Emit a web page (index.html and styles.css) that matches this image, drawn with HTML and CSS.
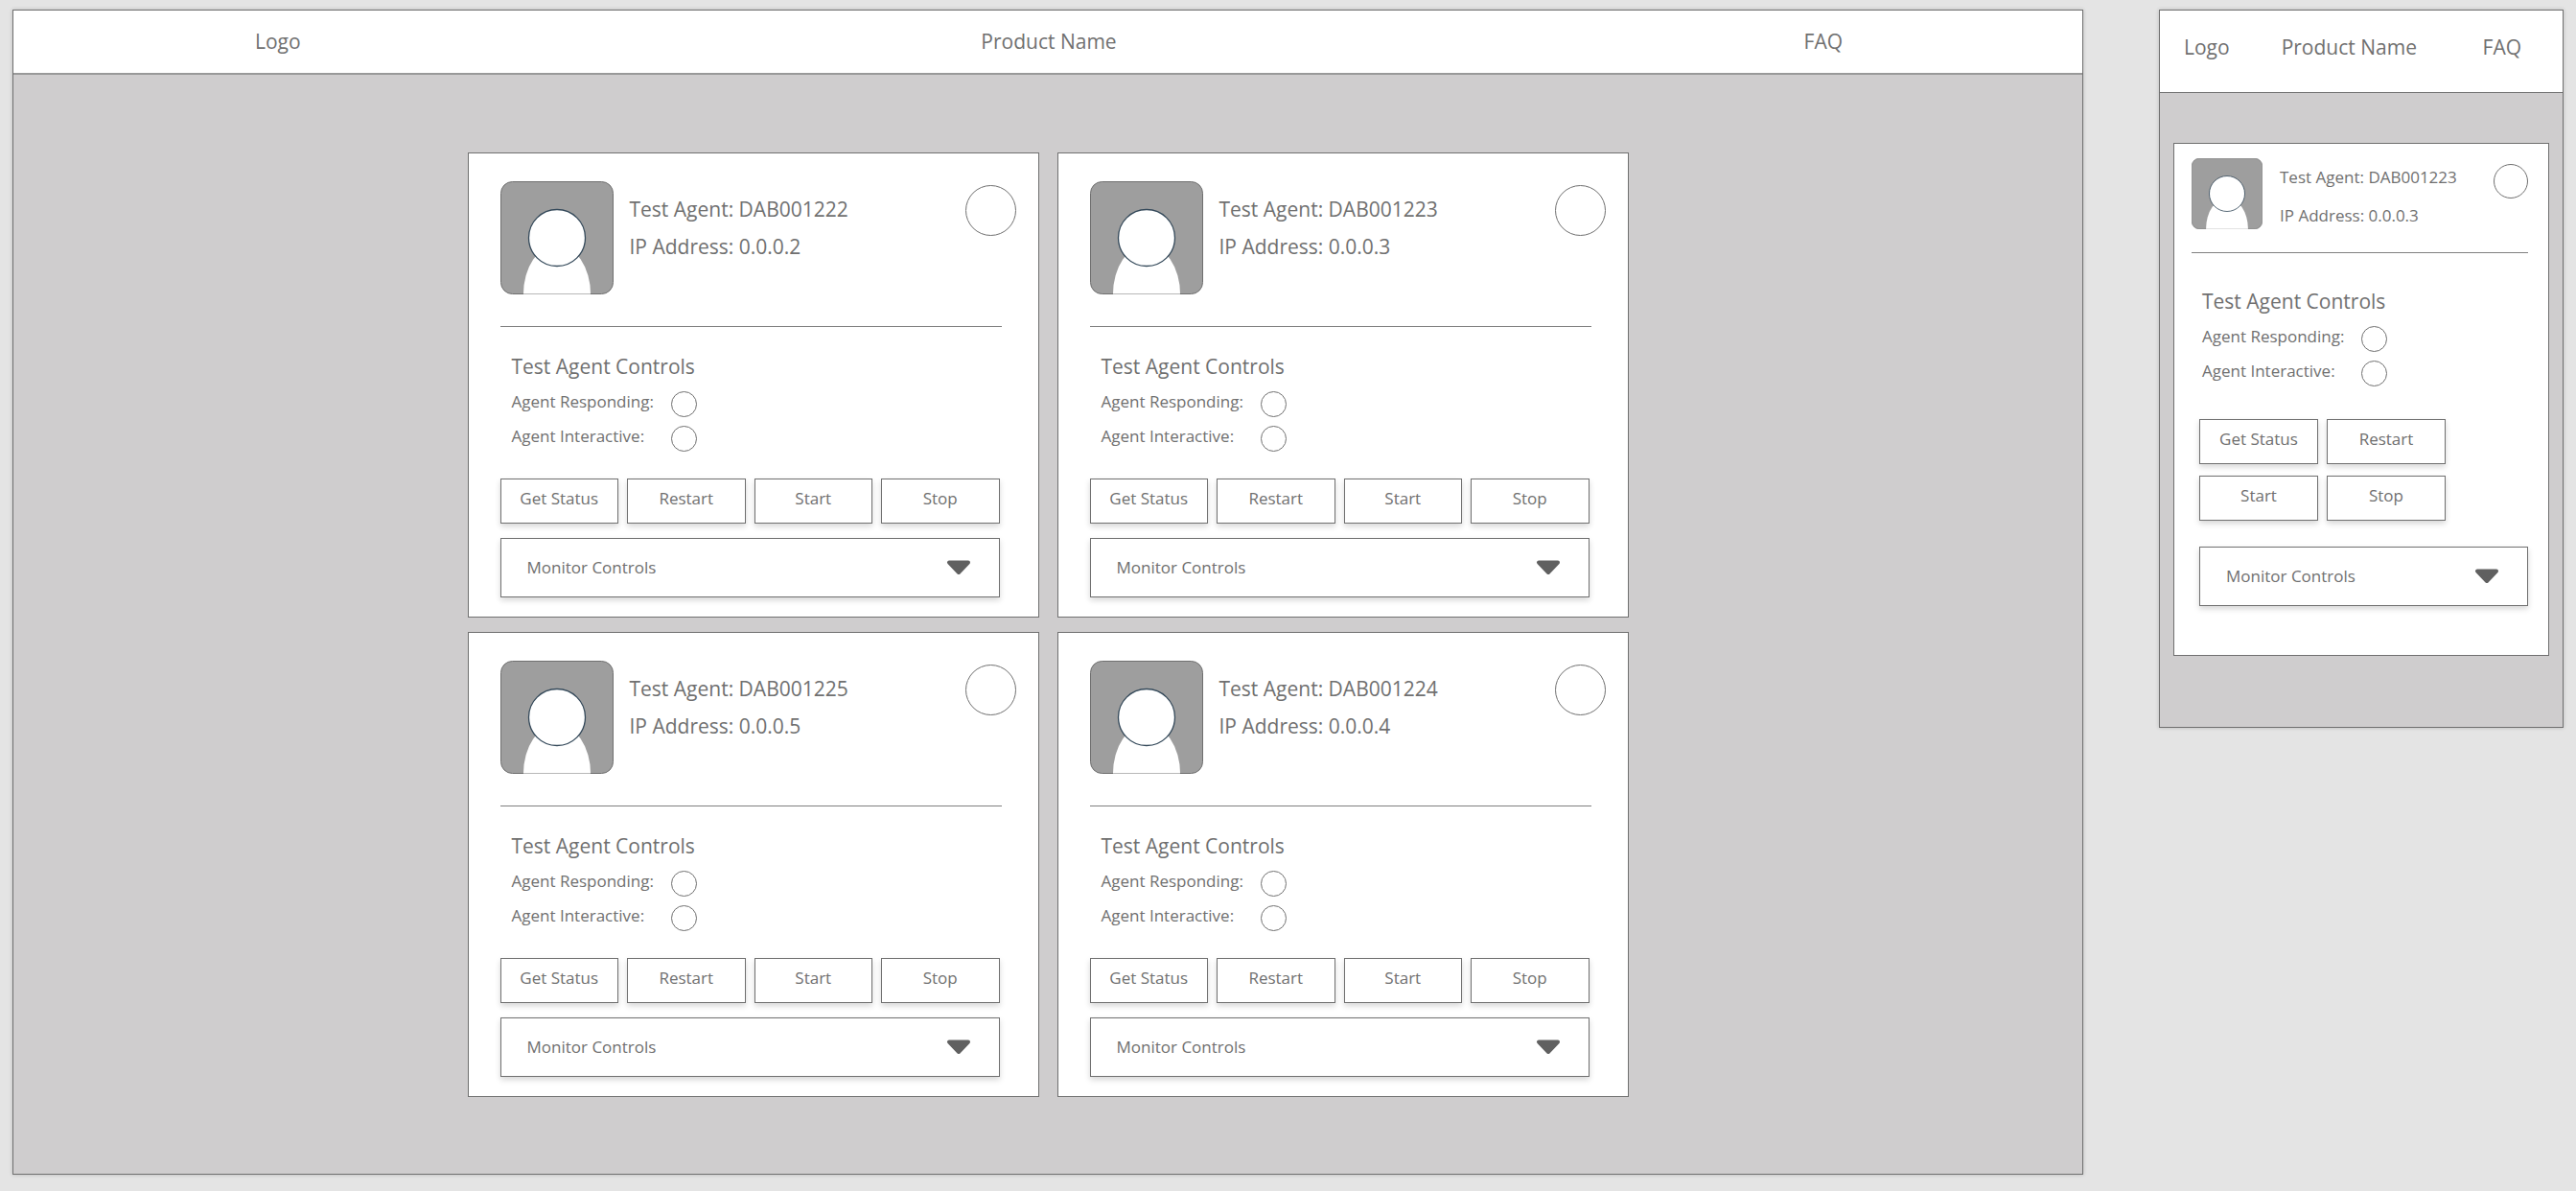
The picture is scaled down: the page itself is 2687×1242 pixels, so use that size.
FILE: index.html
```html
<!DOCTYPE html>
<html lang="en">
<head>
<meta charset="utf-8">
<title>Test Agents</title>
<link rel="stylesheet" href="styles.css">
</head>
<body>
<svg class="sprite" aria-hidden="true">
  <symbol id="avatar" viewBox="0 0 118 118">
    <rect x="0.5" y="0.5" width="117" height="117" rx="12" fill="#9e9e9e" stroke="#707070"/>
    <path d="M24 117.500A35 51 0 0 1 94 117.500Z" fill="#fff"/>
    <circle cx="59" cy="59" r="29.500" fill="#fff" stroke="#34495a" stroke-width="1.300"/>
  </symbol>
  <symbol id="caret" viewBox="0 0 26 16">
    <path d="M3 2.500H23L13 13Z" fill="#606060" stroke="#606060" stroke-width="4" stroke-linejoin="round"/>
  </symbol>
</svg>

<main class="canvas">
  <section class="board board-desktop" aria-label="Desktop">
    <header class="bar">
      <a href="#">Logo</a>
      <span>Product Name</span>
      <a href="#">FAQ</a>
    </header>
    <div class="cards">
      <article class="card">
        <div class="head">
          <svg class="avatar" aria-hidden="true"><use href="#avatar"/></svg>
          <div class="ident"><p>Test Agent: DAB001222</p><p>IP Address: 0.0.0.2</p></div>
          <span class="lamp lamp-large"></span>
        </div>
        <hr>
        <h2>Test Agent Controls</h2>
        <ul class="states">
          <li><span>Agent Responding:</span><span class="lamp"></span></li>
          <li><span>Agent Interactive:</span><span class="lamp"></span></li>
        </ul>
        <div class="actions">
          <button type="button">Get Status</button>
          <button type="button">Restart</button>
          <button type="button">Start</button>
          <button type="button">Stop</button>
        </div>
        <div class="monitor">
          <select aria-label="Monitor Controls"><option>Monitor Controls</option></select>
          <svg class="caret" aria-hidden="true"><use href="#caret"/></svg>
        </div>
      </article>
      <article class="card">
        <div class="head">
          <svg class="avatar" aria-hidden="true"><use href="#avatar"/></svg>
          <div class="ident"><p>Test Agent: DAB001223</p><p>IP Address: 0.0.0.3</p></div>
          <span class="lamp lamp-large"></span>
        </div>
        <hr>
        <h2>Test Agent Controls</h2>
        <ul class="states">
          <li><span>Agent Responding:</span><span class="lamp"></span></li>
          <li><span>Agent Interactive:</span><span class="lamp"></span></li>
        </ul>
        <div class="actions">
          <button type="button">Get Status</button>
          <button type="button">Restart</button>
          <button type="button">Start</button>
          <button type="button">Stop</button>
        </div>
        <div class="monitor">
          <select aria-label="Monitor Controls"><option>Monitor Controls</option></select>
          <svg class="caret" aria-hidden="true"><use href="#caret"/></svg>
        </div>
      </article>
      <article class="card">
        <div class="head">
          <svg class="avatar" aria-hidden="true"><use href="#avatar"/></svg>
          <div class="ident"><p>Test Agent: DAB001225</p><p>IP Address: 0.0.0.5</p></div>
          <span class="lamp lamp-large"></span>
        </div>
        <hr>
        <h2>Test Agent Controls</h2>
        <ul class="states">
          <li><span>Agent Responding:</span><span class="lamp"></span></li>
          <li><span>Agent Interactive:</span><span class="lamp"></span></li>
        </ul>
        <div class="actions">
          <button type="button">Get Status</button>
          <button type="button">Restart</button>
          <button type="button">Start</button>
          <button type="button">Stop</button>
        </div>
        <div class="monitor">
          <select aria-label="Monitor Controls"><option>Monitor Controls</option></select>
          <svg class="caret" aria-hidden="true"><use href="#caret"/></svg>
        </div>
      </article>
      <article class="card">
        <div class="head">
          <svg class="avatar" aria-hidden="true"><use href="#avatar"/></svg>
          <div class="ident"><p>Test Agent: DAB001224</p><p>IP Address: 0.0.0.4</p></div>
          <span class="lamp lamp-large"></span>
        </div>
        <hr>
        <h2>Test Agent Controls</h2>
        <ul class="states">
          <li><span>Agent Responding:</span><span class="lamp"></span></li>
          <li><span>Agent Interactive:</span><span class="lamp"></span></li>
        </ul>
        <div class="actions">
          <button type="button">Get Status</button>
          <button type="button">Restart</button>
          <button type="button">Start</button>
          <button type="button">Stop</button>
        </div>
        <div class="monitor">
          <select aria-label="Monitor Controls"><option>Monitor Controls</option></select>
          <svg class="caret" aria-hidden="true"><use href="#caret"/></svg>
        </div>
      </article>
    </div>
  </section>

  <section class="board board-mobile" aria-label="Mobile">
    <header class="bar">
      <a href="#">Logo</a>
      <span>Product Name</span>
      <a href="#">FAQ</a>
    </header>
    <div class="cards">
      <article class="card">
        <div class="head">
          <svg class="avatar" aria-hidden="true"><use href="#avatar"/></svg>
          <div class="ident"><p>Test Agent: DAB001223</p><p>IP Address: 0.0.0.3</p></div>
          <span class="lamp lamp-large"></span>
        </div>
        <hr>
        <h2>Test Agent Controls</h2>
        <ul class="states">
          <li><span>Agent Responding:</span><span class="lamp"></span></li>
          <li><span>Agent Interactive:</span><span class="lamp"></span></li>
        </ul>
        <div class="actions">
          <button type="button">Get Status</button>
          <button type="button">Restart</button>
          <button type="button">Start</button>
          <button type="button">Stop</button>
        </div>
        <div class="monitor">
          <select aria-label="Monitor Controls"><option>Monitor Controls</option></select>
          <svg class="caret" aria-hidden="true"><use href="#caret"/></svg>
        </div>
      </article>
    </div>
  </section>
</main>
</body>
</html>
```

FILE: styles.css
```css
* {
  box-sizing: border-box;
}

body {
  margin: 0;
  background: #e4e4e4;
  color: #707070;
  font-family: "Open Sans", "Noto Sans", sans-serif;
  font-size: 21px;
  line-height: 32px;
}

p, h2, ul {
  margin: 0;
  padding: 0;
}

a {
  color: inherit;
  text-decoration: none;
}

.sprite {
  display: none;
}

.canvas {
  display: flex;
  align-items: flex-start;
  gap: 79px;
  padding: 10px 13px;
}

.board {
  border: 1px solid #707070;
  background: #cfcdce;
  box-shadow: 0 0 4px rgba(0, 0, 0, 0.2);
}

.board-desktop {
  flex: 1;
}

.board-mobile {
  flex: none;
  width: 422px;
}

.bar {
  background: #fff;
}

.board-desktop .bar {
  display: grid;
  grid-template-columns: 1fr auto 1fr;
  padding: 16px 250px 17px 252px;
  border-bottom: 2px solid #999;
}

.board-desktop .bar :last-child {
  justify-self: end;
}

.board-mobile .bar {
  display: flex;
  gap: 54px;
  padding: 22px 43px 31px 25px;
  border-bottom: 1px solid #707070;
}

.board-mobile .bar :last-child {
  margin-left: auto;
}

.board-desktop .cards {
  display: grid;
  grid-template-columns: repeat(2, minmax(0, 596px));
  justify-content: center;
  gap: 15px 19px;
  padding: 81px 20px 80px;
}

.board-mobile .cards {
  padding: 52px 14px 74px;
}

.card {
  border: 1px solid #707070;
  background: #fff;
}

.board-desktop .card {
  padding: 29px 38px 20px 33px;
}

.board-mobile .card {
  padding: 15px 21px 51px 18px;
}

/* Identity row: the large lamp hangs past the divider on wide cards. */
.head {
  display: flex;
  align-items: flex-start;
}

.board-desktop .head {
  gap: 17px;
  margin-right: -15px;
}

.board-mobile .head {
  gap: 18px;
}

.avatar {
  flex: none;
  width: 118px;
  height: 118px;
}

.board-mobile .avatar {
  width: 74px;
  height: 74px;
}

.ident {
  flex: 1;
  padding-top: 10px;
  line-height: 39px;
}

.board-mobile .ident {
  padding-top: 0;
  font-size: 17px;
  line-height: 40px;
}

.lamp {
  flex: none;
  width: 27px;
  height: 27px;
  border: 1px solid #707070;
  border-radius: 50%;
}

.lamp-large {
  width: 53px;
  height: 53px;
  margin-top: 4px;
}

.board-mobile .lamp-large {
  width: 36px;
  height: 36px;
  margin-top: 6px;
}

hr {
  margin: 33px 0 25px;
  border: 0;
  border-top: 1px solid #808080;
}

.board-mobile hr {
  margin: 18px 0 34px;
}

h2 {
  padding-left: 12px;
  font-size: 21px;
  font-weight: 400;
}

.states {
  padding: 5px 0 0 12px;
  font-size: 17px;
  list-style: none;
}

.board-mobile h2,
.board-mobile .states {
  padding-left: 11px;
}

.states li {
  display: grid;
  grid-template-columns: 166px 27px;
  height: 36px;
}

.states .lamp {
  margin-top: 5px;
}

.actions {
  display: grid;
  gap: 12px 9px;
}

.board-desktop .actions {
  grid-template-columns: repeat(4, minmax(0, 1fr));
  margin: 24px 2px 15px 0;
}

.board-mobile .actions {
  grid-template-columns: repeat(2, 124px);
  margin: 30px 0 27px 8px;
}

button, select {
  border: 1px solid #707070;
  border-radius: 0;
  background: #fff;
  box-shadow: 0 3px 6px rgba(0, 0, 0, 0.16);
  color: inherit;
  font: 400 17px/24px "Open Sans", "Noto Sans", sans-serif;
}

button {
  height: 47px;
  padding: 0 0 6px;
}

.monitor {
  display: grid;
  align-items: center;
}

.board-desktop .monitor {
  margin-right: 2px;
}

.board-mobile .monitor {
  margin-left: 8px;
}

.monitor > * {
  grid-area: 1 / 1;
}

.monitor select {
  height: 62px;
  padding: 0 60px 0 27px;
  appearance: none;
}

.caret {
  justify-self: end;
  width: 26px;
  height: 16px;
  margin-right: 30px;
  pointer-events: none;
}
```
